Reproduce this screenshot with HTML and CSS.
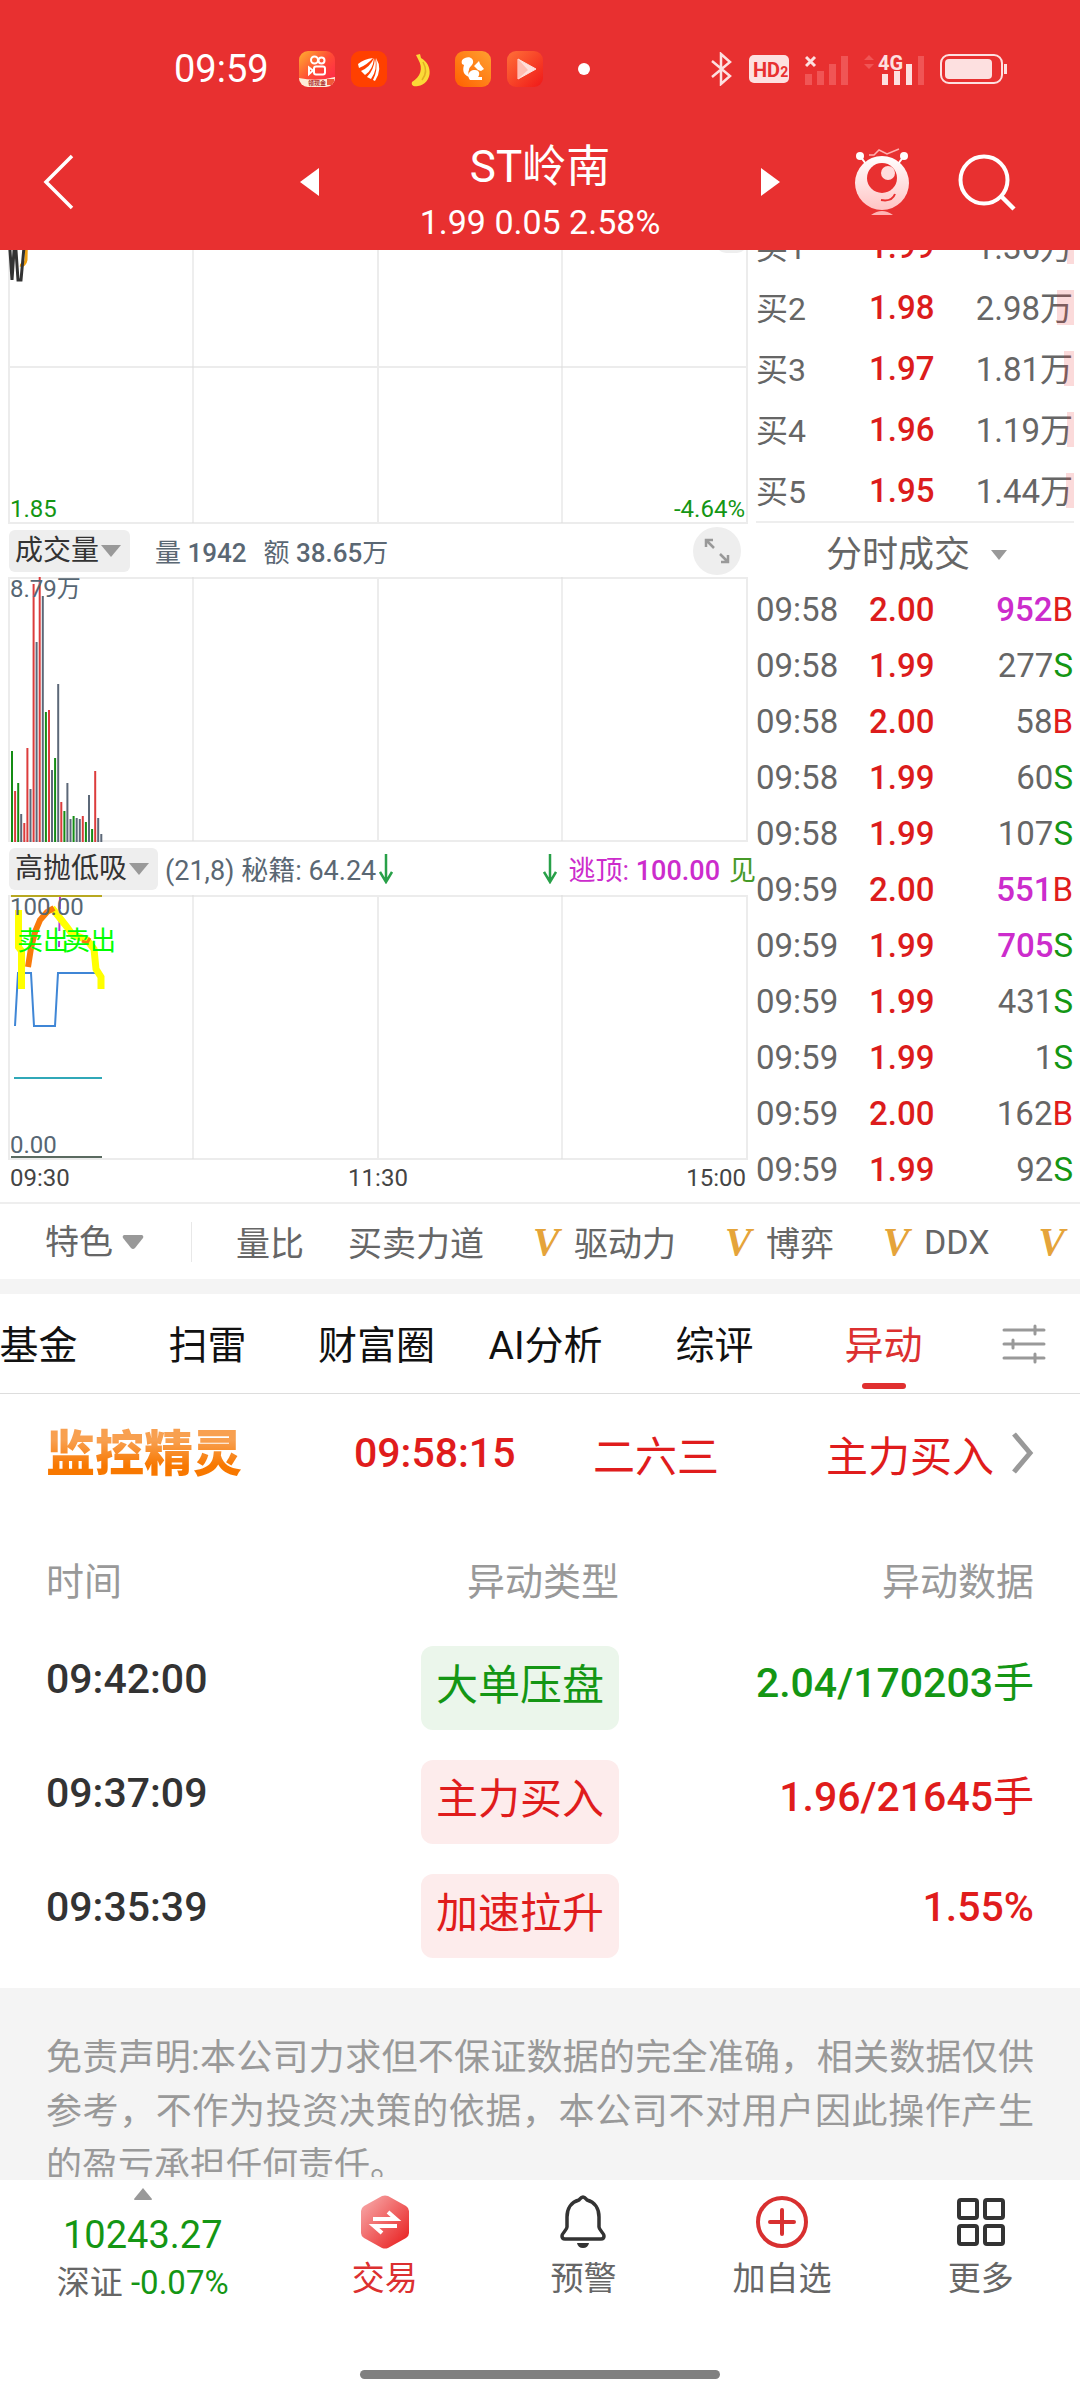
FILE: index.html
```html
<!doctype html>
<html lang="zh-CN">
  <head>
    <meta charset="UTF-8" />
    <meta name="viewport" content="width=device-width, initial-scale=1.0" />
    <title>ST岭南</title>
    <link rel="stylesheet" href="styles.css">
  </head>
  <body>
    <header class="header">
      <div class="status-bar">
        <span class="clock">09:59</span>
        <div class="app-icons">
          <svg width="36" height="36" viewBox="0 0 36 36">
            <defs>
              <linearGradient id="ks" x1="0" y1="0" x2="1" y2="1">
                <stop offset="0" stop-color="#ffb030" />
                <stop offset=".5" stop-color="#ff4a35" />
                <stop offset="1" stop-color="#ff2050" />
              </linearGradient>
              <clipPath id="ks-clip"><rect width="36" height="36" rx="9" /></clipPath>
            </defs>
            <g clip-path="url(#ks-clip)">
              <rect width="36" height="36" fill="url(#ks)" />
              <path d="M0 27Q18 31 36 26V36H0z" fill="#fdecd8" />
              <path d="M28 28h7v6h-7z" fill="#f05a3a" />
            </g>
            <g fill="none" stroke="#fff" stroke-width="2">
              <circle cx="15.500" cy="9" r="3.500" />
              <circle cx="22.500" cy="9.500" r="3" />
              <rect x="15" y="15.500" width="11" height="8" rx="2" />
              <path d="M14 19.500L10 16.500v6.500z" />
            </g>
            <text x="9" y="34" class="ks-tag">领现金</text>
          </svg>
          <svg width="36" height="36" viewBox="0 0 36 36">
            <rect width="36" height="36" rx="9" fill="#ff4000" />
            <path d="M7 13Q13 8 22 7Q16 14 8 17zM10 20Q19 16 23 7Q22 19 14 24L12 22zM16 26Q23 19 24 7Q27 18 20 28zM22 29Q27 20 25 7Q32 18 24 30z" fill="#fff" />
          </svg>
          <svg width="36" height="36" viewBox="0 0 36 36">
            <path d="M13 4l4-1 1 4c13 7 11 26-3 28-5 1-7-1-6-4 8-5 12-13 6-23z" fill="#fbd937" />
            <path d="M20 11c4 7 3 13-1 18" fill="none" stroke="#e3ae24" stroke-width="1.500" />
          </svg>
          <svg width="36" height="36" viewBox="0 0 36 36">
            <defs>
              <linearGradient id="uc" x1="1" y1="0" x2="0" y2="1">
                <stop offset="0" stop-color="#ffa030" />
                <stop offset="1" stop-color="#ff6000" />
              </linearGradient>
            </defs>
            <rect width="36" height="36" rx="9" fill="url(#uc)" />
            <path d="M10 7c5-2 9 1 8 5-1 3-4 4-4 7-1 2-1 4 1 7-6-1-8-6-6-12l-2-1c-1-3 0-5 3-6z" fill="#fff" />
            <path d="M19 15l5-5 1 3 4 5-3 2-3-1z" fill="#fff" />
            <path d="M15 29c-4-5 0-11 5-10 5 0 5 5 3 7h4v3z" fill="#fff" />
          </svg>
          <svg width="36" height="36" viewBox="0 0 36 36">
            <defs>
              <linearGradient id="vid" x1="0" y1="0" x2="1" y2="1">
                <stop offset="0" stop-color="#ff7038" />
                <stop offset="1" stop-color="#f01818" />
              </linearGradient>
            </defs>
            <rect width="36" height="36" rx="9" fill="url(#vid)" />
            <path d="M11 8l18 10-18 10z" fill="#ffe0dc" stroke="#ffe0dc" stroke-width="1" stroke-linejoin="round" />
            <path d="M11 8l10 11-10 9z" fill="#ffbdb2" />
          </svg>
        </div>
        <span class="more-dot"></span>
        <div class="sys-icons">
          <svg width="22" height="34" viewBox="0 0 22 34" fill="none" stroke="#fde0e0" stroke-width="2.500">
            <path d="M1 9l18 15-9 8V2l9 8L1 25" />
          </svg>
          <svg width="40" height="28" viewBox="0 0 40 28">
            <rect width="40" height="28" rx="5" fill="#fde0e0" />
            <text x="4" y="22" class="hd">HD<tspan font-size="14">2</tspan></text>
          </svg>
          <svg width="43" height="34" viewBox="0 0 43 34">
            <path d="M1 5l9 9M10 5l-9 9" stroke="#fde0e0" stroke-width="3" />
            <path d="M0 22h7v11H0zM12 19h7v14h-7zM24 12h7v21h-7zM36 4h7v29h-7z" fill="#f05555" />
          </svg>
          <svg width="60" height="34" viewBox="0 0 60 34">
            <path d="M0 8l5-5 5 5zM0 12l5 5 5-5z" fill="#f05555" />
            <text x="14" y="18" class="net">4G</text>
            <path d="M18 22h6v11h-6zM30 19h6v14h-6zM42 12h6v21h-6z" fill="#fde0e0" />
            <path d="M54 4h6v29h-6z" fill="#f05555" />
          </svg>
          <svg width="67" height="30" viewBox="0 0 67 30">
            <rect x="1" y="1" width="61" height="28" rx="8" fill="none" stroke="#fde0e0" stroke-width="2" />
            <rect x="5" y="5" width="47" height="20" rx="4" fill="#fde0e0" />
            <path d="M64 10h3v10h-3z" fill="#fde0e0" />
          </svg>
        </div>
      </div>
      <div class="title-bar">
        <button class="icon-btn back" aria-label="返回">
          <svg width="32" height="56" viewBox="0 0 32 56"><path d="M30 2L4 28l26 26" fill="none" stroke="#fff" stroke-width="3.500" /></svg>
        </button>
        <button class="icon-btn" aria-label="上一只">
          <svg width="20" height="28" viewBox="0 0 20 28"><path d="M19 0v28L0 14z" fill="#fff" /></svg>
        </button>
        <div class="title">
          <h1>ST岭南</h1>
          <p>1.99 0.05 2.58%</p>
        </div>
        <button class="icon-btn" aria-label="下一只">
          <svg width="20" height="28" viewBox="0 0 20 28"><path d="M1 0v28l19-14z" fill="#fff" /></svg>
        </button>
        <div class="title-actions">
          <button class="icon-btn" aria-label="助手">
            <svg width="56" height="68" viewBox="0 0 56 68">
              <defs>
                <linearGradient id="bot" x1="0" y1="0" x2="0" y2="1">
                  <stop offset="0" stop-color="#fff" />
                  <stop offset="1" stop-color="#ffc4c4" />
                </linearGradient>
              </defs>
              <path d="M15 7h5l5-5 8 4 12-5" fill="none" stroke="#ffb0b0" stroke-width="1.500" />
              <path d="M6 8l6 8M50 8l-6 8" stroke="#fff" stroke-width="2" />
              <circle cx="6" cy="8" r="4" fill="#fff" />
              <circle cx="50" cy="8" r="4" fill="#fff" />
              <circle cx="28" cy="35" r="27" fill="url(#bot)" />
              <circle cx="28" cy="30" r="15" fill="#e83030" />
              <circle cx="34" cy="25" r="7" fill="#ffdcdc" />
              <path d="M27 52q11 2 14-6" fill="none" stroke="#e83030" stroke-width="2" />
              <path d="M17 67q11-8 22 0z" fill="#ffb4b4" />
            </svg>
          </button>
          <button class="icon-btn" aria-label="搜索">
            <svg width="58" height="60" viewBox="0 0 58 60" fill="none" stroke="#fff">
              <circle cx="26" cy="28" r="23.500" stroke-width="4" />
              <path d="M43 44l13 13" stroke-width="4.500" />
            </svg>
          </button>
        </div>
      </div>
    </header>

    <main class="content">
      <section class="quote">
        <div class="charts">
          <div class="plot plot-price">
            <svg viewBox="0 0 740 308" preserveAspectRatio="none">
              <path class="grid" d="M1 0V307H739V0M1 151H739M370 0V307" />
              <path class="grid-thin" d="M185 0V307M554 0V307" />
              <rect x="708" y="0" width="31" height="37" rx="10" fill="#eee" />
              <path d="M19 0L18 44Q17 50 12 49" fill="none" stroke="#f0a010" stroke-width="3" />
              <path d="M1 20L4 64L7 20L10 64H13L17 20" fill="none" stroke="#333" stroke-width="3" />
            </svg>
            <span class="tick tick-bl down">1.85</span>
            <span class="tick tick-br down">-4.64%</span>
          </div>

          <div class="legend">
            <label class="picker pill">
              <select aria-label="指标"><option>成交量</option></select>
              <svg width="20" height="12" viewBox="0 0 20 12"><path d="M0 0h20L10 12z" /></svg>
            </label>
            <p class="readout">
              <span>量 <b>1942</b></span>
              <span>额 <b>38.65</b>万</span>
            </p>
            <button class="expand" aria-label="放大">
              <svg width="26" height="26" viewBox="0 0 26 26" fill="none" stroke="#999" stroke-width="2.500">
                <path d="M2 9V2h7M2 2l8 8M24 17v7h-7M24 24l-8-8" />
              </svg>
            </button>
          </div>

          <div class="plot">
            <svg viewBox="0 0 740 265" preserveAspectRatio="none">
              <path class="grid" d="M1 1H739V264H1zM370 0V265" />
              <path class="grid-thin" d="M185 0V264M554 0V264" />
              <path class="bar bar-up" d="M7.100 265V214M16.300 265V246M19.400 265V171M25.600 265V7M31.700 265V0M41 265V133M53.300 265V225M74.800 265V239M87.200 265V194" />
              <path class="bar bar-down" d="M4 265V174M10.200 265V206M37.900 265V135M47.100 265V181M56.400 265V234M65.600 265V239M77.900 265V245M84.100 265V252" />
              <path class="bar bar-flat" d="M13.200 265V237M22.500 265V212M28.600 265V65M34.800 265V19M44 265V193M50.200 265V107M59.400 265V206M62.500 265V242M68.700 265V241M71.800 265V242M81 265V218M90.200 265V241M93.300 265V257" />
            </svg>
            <span class="tick tick-tl">8.79万</span>
          </div>

          <div class="legend">
            <label class="picker pill">
              <select aria-label="指标"><option>高抛低吸</option></select>
              <svg width="20" height="12" viewBox="0 0 20 12"><path d="M0 0h20L10 12z" /></svg>
            </label>
            <p class="signals">
              <span>(21,8) 秘籍: 64.24</span>
              <svg class="arrow" width="14" height="30" viewBox="0 0 14 30"><path d="M7 0v27M1 18l6 10 6-10" /></svg>
              <svg class="arrow arrow-exit" width="14" height="30" viewBox="0 0 14 30"><path d="M7 0v27M1 18l6 10 6-10" /></svg>
              <span class="exit">逃顶: <b>100.00</b></span>
              <span class="seen">见</span>
            </p>
          </div>

          <div class="plot">
            <svg viewBox="0 0 740 265" preserveAspectRatio="none" fill="none">
              <path class="grid" d="M1 1H739V264H1zM370 0V265" />
              <path class="grid-thin" d="M185 0V264M554 0V264" />
              <path d="M3 1H94" stroke="#b8a820" stroke-width="2" />
              <path d="M52 2L51 52" stroke="#b838cc" stroke-width="2" stroke-dasharray="12 10" />
              <path d="M7 131L10 78H23L26 131H47L50 78H87" stroke="#3f86d6" stroke-width="2" />
              <path d="M10.500 15V52L13.500 56V94" stroke="#ff0" stroke-width="7" />
              <path d="M44 13L59 32L64 39L79 45L86 54L88 74L93 82V94" stroke="#ff0" stroke-width="7" />
              <path d="M20 72L23 53L27 37L32 25L39 17L46 13" stroke="#f97a0a" stroke-width="6" />
              <path d="M74 46L79 48L82 43" stroke="#f97a0a" stroke-width="3" />
              <path d="M6 183H94" stroke="#30a8b8" stroke-width="2" />
              <path d="M3 262H94" stroke="#5a6a60" stroke-width="2" />
            </svg>
            <span class="tick tick-tl">100.00</span>
            <span class="tick tick-bl">0.00</span>
            <span class="mark mark-first">卖出</span>
            <span class="mark mark-second">卖出</span>
          </div>

          <div class="axis"><span>09:30</span><span>11:30</span><span>15:00</span></div>
        </div>

        <div class="side">
          <table class="book">
            <tr><th>买1</th><td class="price">1.99</td><td class="vol"><i style="width: 7px"></i>1.36万</td></tr>
            <tr><th>买2</th><td class="price">1.98</td><td class="vol"><i style="width: 17px"></i>2.98万</td></tr>
            <tr><th>买3</th><td class="price">1.97</td><td class="vol"><i style="width: 10px"></i>1.81万</td></tr>
            <tr><th>买4</th><td class="price">1.96</td><td class="vol"><i style="width: 7px"></i>1.19万</td></tr>
            <tr><th>买5</th><td class="price">1.95</td><td class="vol"><i style="width: 8px"></i>1.44万</td></tr>
          </table>
          <div class="side-switch">
            <label class="picker">
              <select aria-label="成交明细"><option>分时成交</option></select>
              <svg width="16" height="10" viewBox="0 0 16 10"><path d="M0 0h16L8 10z" /></svg>
            </label>
          </div>
          <table class="trades">
            <tr><td>09:58</td><td class="price">2.00</td><td class="vol"><span class="big">952</span><span class="up">B</span></td></tr>
            <tr><td>09:58</td><td class="price">1.99</td><td class="vol">277<span class="down">S</span></td></tr>
            <tr><td>09:58</td><td class="price">2.00</td><td class="vol">58<span class="up">B</span></td></tr>
            <tr><td>09:58</td><td class="price">1.99</td><td class="vol">60<span class="down">S</span></td></tr>
            <tr><td>09:58</td><td class="price">1.99</td><td class="vol">107<span class="down">S</span></td></tr>
            <tr><td>09:59</td><td class="price">2.00</td><td class="vol"><span class="big">551</span><span class="up">B</span></td></tr>
            <tr><td>09:59</td><td class="price">1.99</td><td class="vol"><span class="big">705</span><span class="down">S</span></td></tr>
            <tr><td>09:59</td><td class="price">1.99</td><td class="vol">431<span class="down">S</span></td></tr>
            <tr><td>09:59</td><td class="price">1.99</td><td class="vol">1<span class="down">S</span></td></tr>
            <tr><td>09:59</td><td class="price">2.00</td><td class="vol">162<span class="up">B</span></td></tr>
            <tr><td>09:59</td><td class="price">1.99</td><td class="vol">92<span class="down">S</span></td></tr>
          </table>
        </div>
      </section>

      <div class="features">
        <label class="picker feature-pick">
          <select aria-label="指标分类"><option>特色</option></select>
          <svg width="22" height="14" viewBox="0 0 22 14"><path d="M2 0h18q2 1 1 3l-8 10q-2 2-4 0L1 3Q0 1 2 0z" /></svg>
        </label>
        <button>量比</button>
        <button>买卖力道</button>
        <button><em>V</em>驱动力</button>
        <button><em>V</em>博弈</button>
        <button><em>V</em>DDX</button>
        <button><em>V</em></button>
      </div>

      <nav class="tabs">
        <div class="tab-list">
          <a href="#fund">基金</a>
          <a href="#scan">扫雷</a>
          <a href="#circle">财富圈</a>
          <a href="#ai">AI分析</a>
          <a href="#review">综评</a>
          <a href="#moves" class="active">异动</a>
        </div>
        <button class="tab-settings" aria-label="设置">
          <svg width="44" height="40" viewBox="0 0 44 40" stroke="#999" stroke-width="3" stroke-linecap="round">
            <path d="M2 6h40M2 20h40M2 34h40M33 2v8M11 16v8M33 30v8" />
          </svg>
        </button>
      </nav>

      <a class="monitor" href="#monitor">
        <strong>监控精灵</strong>
        <time>09:58:15</time>
        <span>二六三</span>
        <span>主力买入</span>
        <svg width="22" height="42" viewBox="0 0 22 42"><path d="M2 2l16 19L2 40" fill="none" stroke="#999" stroke-width="5" /></svg>
      </a>

      <table class="moves">
        <thead>
          <tr><th>时间</th><th>异动类型</th><th>异动数据</th></tr>
        </thead>
        <tbody>
          <tr><td>09:42:00</td><td><span class="tag tag-down">大单压盘</span></td><td class="down">2.04/170203<span class="unit">手</span></td></tr>
          <tr><td>09:37:09</td><td><span class="tag tag-up">主力买入</span></td><td class="up">1.96/21645<span class="unit">手</span></td></tr>
          <tr><td>09:35:39</td><td><span class="tag tag-up">加速拉升</span></td><td class="up">1.55%</td></tr>
        </tbody>
      </table>

      <p class="disclaimer">免责声明:本公司力求但不保证数据的完全准确，相关数据仅供参考，不作为投资决策的依据，本公司不对用户因此操作产生的盈亏承担任何责任。</p>
    </main>

    <footer class="bottom">
      <nav class="bottom-nav">
        <a class="index" href="#index">
          <svg width="18" height="12" viewBox="0 0 18 12"><path d="M9 0l9 11q0 1-1 1H1q-1 0-1-1z" fill="#999" /></svg>
          <b>10243.27</b>
          <span>深证 <i>-0.07%</i></span>
        </a>
        <a class="active" href="#trade">
          <svg width="54" height="54" viewBox="0 0 54 54">
            <defs>
              <linearGradient id="hex" x1="0" y1="0" x2="1" y2="1">
                <stop offset="0" stop-color="#f8b0b0" />
                <stop offset="1" stop-color="#e81818" />
              </linearGradient>
            </defs>
            <path d="M24 1q3-1 6 0l18 10q3 2 3 5v22q0 3-3 5L30 53q-3 1-6 0L6 43q-3-2-3-5V16q0-3 3-5z" fill="url(#hex)" />
            <path d="M15 24h23l-8-7M39 31H16l8 7" fill="none" stroke="#fff" stroke-width="4" />
          </svg>
          交易
        </a>
        <a href="#alert">
          <svg width="54" height="54" viewBox="0 0 54 54">
            <path d="M27 2c-2 0-3 2-4 3-8 2-12 9-12 17v10c0 3-5 6-5 9 0 2 1 3 3 3h36c2 0 3-1 3-3 0-3-5-6-5-9V22c0-8-4-15-12-17-1-1-2-3-4-3z" fill="none" stroke="#333" stroke-width="3.500" />
            <path d="M21 48h12q-1 5-6 5t-6-5z" fill="#333" />
          </svg>
          预警
        </a>
        <a href="#add">
          <svg width="54" height="54" viewBox="0 0 54 54" fill="none" stroke="#d83030" stroke-width="4">
            <circle cx="27" cy="27" r="24" />
            <path d="M27 15v24M15 27h24" stroke-linecap="round" />
          </svg>
          加自选
        </a>
        <a href="#more">
          <svg width="54" height="54" viewBox="0 0 54 54" fill="none" stroke="#333" stroke-width="4">
            <rect x="5" y="5" width="18" height="18" rx="2" />
            <rect x="31" y="5" width="18" height="18" rx="2" />
            <rect x="5" y="31" width="18" height="18" rx="2" />
            <rect x="31" y="31" width="18" height="18" rx="2" />
          </svg>
          更多
        </a>
      </nav>
      <div class="home-bar"></div>
    </footer>
  </body>
</html>
```
FILE: styles.css
```css
* {
  box-sizing: border-box;
}

body {
  margin: 0;
  height: 100vh;
  display: flex;
  flex-direction: column;
  background: #fff;
  color: #666;
  font-family: Roboto, "Noto Sans CJK SC", sans-serif;
  overflow: hidden;
}

h1, p {
  margin: 0;
  font-weight: 400;
}

a {
  color: inherit;
  text-decoration: none;
}

button, select {
  margin: 0;
  padding: 0;
  border: 0;
  background: none;
  color: inherit;
  font: inherit;
}

svg {
  display: block;
}

i, em {
  font-style: normal;
}

b {
  font-weight: 500;
}

table {
  width: 100%;
  border-collapse: collapse;
}

th, td {
  padding: 0;
  font-weight: 400;
  text-align: left;
}

.up {
  color: #e01c1c;
}

.down {
  color: #149614;
}

.big {
  color: #cc2ccc;
  font-weight: 500;
}

/* header */

.header {
  position: relative;
  z-index: 1;
  flex: none;
  height: 250px;
  background: #e83030;
  color: #fff;
}

.status-bar {
  display: flex;
  align-items: center;
  height: 138px;
  padding: 0 73px 0 174px;
}

.clock {
  font-size: 38px;
}

.app-icons {
  display: flex;
  gap: 16px;
  margin-left: 30px;
}

.more-dot {
  width: 12px;
  height: 12px;
  margin-left: 35px;
  border-radius: 50%;
  background: #fff;
}

.sys-icons {
  display: flex;
  align-items: center;
  gap: 16px;
  margin-left: auto;
}

.ks-tag {
  font-size: 6px;
  font-weight: 700;
  fill: #b03030;
}

.hd {
  font-size: 20px;
  font-weight: 700;
  fill: #e83030;
}

.net {
  font-size: 20px;
  font-weight: 700;
  fill: #fde0e0;
}

.title-bar {
  display: grid;
  grid-template-columns: 1fr 20px 440px 20px 1fr;
  align-items: start;
  padding: 0 64px;
}

.icon-btn {
  display: flex;
  align-items: center;
  justify-content: center;
  height: 88px;
}

.title-bar .back {
  justify-self: start;
  margin-left: -22px;
}

.title {
  text-align: center;
}

.title h1 {
  font-size: 44px;
  line-height: 58px;
}

.title p {
  font-size: 34px;
  line-height: 52px;
}

.title-actions {
  display: flex;
  justify-content: flex-end;
  gap: 48px;
}

/* scrolled content, its top is under the header */

.content {
  flex: 1;
  min-height: 0;
  overflow: hidden;
  border-bottom: 3px solid #f4f4f4;
}

.quote {
  display: grid;
  grid-template-columns: 7fr 3fr;
  margin-top: -34px;
}

.charts {
  padding: 0 8px;
  min-width: 0;
}

.plot {
  position: relative;
  height: 265px;
}

.plot svg {
  width: 100%;
  height: 100%;
}

.plot-price {
  height: 308px;
}

.grid {
  fill: none;
  stroke: #ececec;
  stroke-width: 2;
}

.grid-thin {
  fill: none;
  stroke: #ddd;
  stroke-width: 1;
}

.bar {
  stroke-width: 2;
}

.bar-up {
  stroke: #dc3c3c;
}

.bar-down {
  stroke: #148c14;
}

.bar-flat {
  stroke: #5c6878;
}

.tick {
  position: absolute;
  color: #566673;
  font-size: 24px;
  line-height: 24px;
}

.tick.down {
  color: #149614;
}

.tick-tl {
  top: 0;
  left: 2px;
}

.tick-bl {
  bottom: 3px;
  left: 2px;
}

.tick-br {
  right: 3px;
  bottom: 3px;
}

.mark {
  position: absolute;
  top: 32px;
  color: #0f0;
  font-size: 26px;
  line-height: 28px;
}

.mark-first {
  left: 9px;
}

.mark-second {
  left: 56px;
}

.legend {
  display: flex;
  align-items: center;
  height: 53px;
  margin-right: -8px;
  padding-right: 15px;
  color: #5a6773;
  white-space: nowrap;
}

.picker {
  position: relative;
  display: flex;
  align-items: center;
}

.picker select {
  appearance: none;
}

.picker svg {
  position: absolute;
  right: 0;
  fill: #999;
  pointer-events: none;
}

.pill {
  height: 42px;
  margin-left: 1px;
  padding: 0 9px 0 6px;
  border-radius: 6px;
  background: #eee;
  color: #333;
  font-size: 28px;
}

.pill select {
  padding-right: 21px;
}

.pill svg {
  right: 9px;
}

.readout {
  display: flex;
  gap: 17px;
  margin-left: 25px;
  font-size: 26px;
}

.expand {
  display: flex;
  align-items: center;
  justify-content: center;
  width: 48px;
  height: 48px;
  margin-left: auto;
  border-radius: 50%;
  background: #eee;
}

.signals {
  display: flex;
  align-items: center;
  flex: 1;
  margin-left: 7px;
  margin-right: -15px;
  font-size: 27px;
}

.arrow {
  margin-left: 3px;
  fill: none;
  stroke: #28a048;
  stroke-width: 2.5;
}

.arrow-exit {
  margin-left: auto;
}

.exit {
  margin-left: 12px;
  color: #cc2ccc;
}

.seen {
  margin-left: 9px;
  color: #469a28;
}

.axis {
  display: flex;
  justify-content: space-between;
  padding: 0 2px 5px;
  color: #444;
  font-size: 24px;
  line-height: 37px;
}

/* order book and trades */

.side {
  padding-right: 6px;
  font-size: 33px;
}

.book, .trades {
  table-layout: fixed;
}

.book tr {
  height: 61px;
}

.book th {
  font-size: 32px;
}

.book th, .book .vol {
  padding-bottom: 4px;
}

.book .vol {
  position: relative;
}

.book .vol i {
  position: absolute;
  top: 13px;
  right: 0;
  height: 35px;
  background: rgba(232, 48, 48, 0.18);
}

.trades tr {
  height: 56px;
}

.price {
  padding-left: 7px;
  color: #dc1c1c;
  font-weight: 500;
}

.vol {
  padding-right: 1px;
  text-align: right;
  white-space: nowrap;
}

.side-switch {
  display: flex;
  justify-content: center;
  height: 60px;
  padding: 5px 0 0 3px;
  border-top: 2px solid #eee;
  font-size: 36px;
}

.side-switch select {
  padding-right: 36px;
}

/* indicator shortcuts */

.features {
  display: flex;
  align-items: center;
  gap: 44px;
  height: 92px;
  padding-left: 45px;
  border-top: 2px solid #eee;
  border-bottom: 15px solid #f4f4f4;
  font-size: 34px;
  white-space: nowrap;
  overflow: hidden;
}

.features button {
  display: flex;
  flex: none;
  align-items: center;
  gap: 14px;
}

.features em {
  width: 28px;
  margin-left: 4px;
  color: #e5a43a;
  font: italic 700 40px "Liberation Serif", serif;
}

.feature-pick {
  flex: none;
  padding-right: 47px;
  border-right: 1px solid #e8e8e8;
}

.feature-pick select {
  padding-right: 31px;
}

.feature-pick svg {
  right: 47px;
}

/* section tabs */

.tabs {
  display: flex;
  height: 100px;
  border-bottom: 1px solid #ddd;
}

.tab-list {
  display: flex;
  flex: 1;
  justify-content: flex-end;
  min-width: 0;
  overflow: hidden;
  color: #111;
  font-size: 39px;
  line-height: 104px;
}

.tab-list a {
  position: relative;
  flex: none;
  width: 169px;
  text-align: center;
}

.tab-list .active {
  color: #dc3030;
}

.tab-list .active::after {
  content: "";
  position: absolute;
  bottom: 4px;
  left: 50%;
  width: 44px;
  height: 6px;
  margin-left: -22px;
  border-radius: 3px;
  background: #e03030;
}

.tab-settings {
  flex: none;
  padding: 0 34px;
}

.monitor {
  display: grid;
  grid-template-columns: 308fr 239fr 233fr 186fr 22px;
  align-items: center;
  height: 118px;
  padding: 0 46px;
  color: #e01c1c;
  font-size: 42px;
}

.monitor strong {
  padding-top: 4px;
  background: linear-gradient(#f8a050 30%, #f87800 70%);
  background-clip: text;
  color: transparent;
  font-size: 49px;
  font-weight: 900;
  line-height: 60px;
}

.monitor time {
  font-size: 41px;
  font-weight: 500;
}

/* moves table */

.moves {
  table-layout: fixed;
  width: calc(100% - 92px);
  margin: 0 46px 15px;
  font-size: 41px;
}

.moves th {
  height: 119px;
  padding-top: 14px;
  color: #999;
  font-size: 38px;
}

.moves th:nth-child(1), .moves td:nth-child(1) {
  width: 25%;
}

.moves th:nth-child(2), .moves td:nth-child(2) {
  width: 33%;
  text-align: right;
}

.moves th:nth-child(3), .moves td:nth-child(3) {
  width: 42%;
  text-align: right;
}

.moves td {
  height: 114px;
  padding-bottom: 18px;
  font-weight: 500;
}

.moves td:nth-child(1) {
  color: #333;
}

.moves td:nth-child(2) {
  padding-bottom: 0;
}

.unit {
  font-weight: 400;
}

.tag {
  display: inline-block;
  height: 84px;
  padding: 0 15px;
  border-radius: 12px;
  font-size: 42px;
  font-weight: 400;
  line-height: 80px;
  vertical-align: middle;
}

.tag-down {
  background: #ebf6eb;
  color: #149614;
}

.tag-up {
  background: #fdecec;
  color: #e01c1c;
}

.disclaimer {
  padding: 43px 46px;
  background: #f4f4f4;
  color: #999;
  font-size: 36px;
  line-height: 54px;
  text-align: justify;
}

/* bottom bar */

.bottom {
  flex: none;
  height: 220px;
}

.bottom-nav {
  display: grid;
  grid-template-columns: 286fr repeat(4, 199fr);
  height: 190px;
}

.bottom-nav a {
  display: flex;
  flex-direction: column;
  align-items: center;
  gap: 8px;
  padding-top: 15px;
  font-size: 33px;
  line-height: 44px;
}

.bottom-nav .active {
  color: #dc3030;
}

.bottom-nav .index {
  gap: 0;
  padding-top: 8px;
}

.index b {
  margin-top: 10px;
  color: #149614;
  font-size: 38px;
  font-weight: 400;
  line-height: 50px;
}

.index span {
  font-size: 33px;
  line-height: 46px;
}

.index i {
  color: #149614;
}

.home-bar {
  width: 33.333%;
  height: 9px;
  margin: 0 auto;
  border-radius: 5px;
  background: #808080;
}
```
